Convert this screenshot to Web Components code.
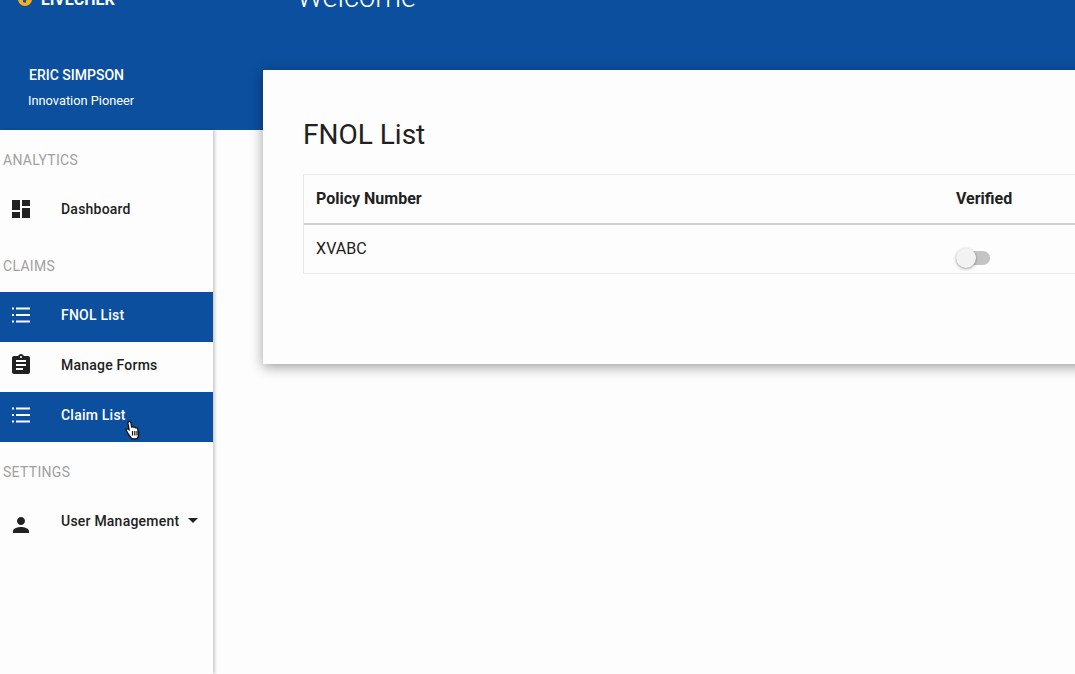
<!DOCTYPE html>
<html>
<head>
<meta charset="utf-8">
<title>FNOL List</title>
<style>
  html, body { margin: 0; height: 100%; overflow: hidden; background: #fdfdfd; }
  body { font-family: Roboto, "Liberation Sans", sans-serif; color: #212121; }
</style>
</head>
<body>
<app-shell>
  <nav-panel slot="nav">
    <nav-heading>ANALYTICS</nav-heading>
    <nav-item icon="dashboard">Dashboard</nav-item>
    <nav-heading>CLAIMS</nav-heading>
    <nav-item icon="list" active>FNOL List</nav-item>
    <nav-item icon="assignment">Manage Forms</nav-item>
    <nav-item icon="list" active hovered>Claim List</nav-item>
    <nav-heading>SETTINGS</nav-heading>
    <nav-item icon="person" caret>User Management</nav-item>
  </nav-panel>
  <list-card slot="main" heading="FNOL List">
    <policy-table></policy-table>
  </list-card>
</app-shell>

<script>
const ICONS = {
  dashboard: '<path d="M3 13h8V3H3v10zm0 8h8v-6H3v6zm10 0h8V11h-8v10zm0-18v6h8V3h-8z"/>',
  list: '<path d="M3 4.5h2v2H3zM7 4.6h14v1.800H7zM3 11h2v2H3zM7 11.100h14v1.800H7zM3 17.500h2v2H3zM7 17.600h14v1.800H7z"/>',
  assignment: '<path d="M19 3h-4.18C14.4 1.84 13.3 1 12 1s-2.4.84-2.82 2H5c-1.1 0-2 .9-2 2v14c0 1.1.9 2 2 2h14c1.1 0 2-.9 2-2V5c0-1.1-.9-2-2-2zm-7 0c.55 0 1 .45 1 1s-.45 1-1 1-1-.45-1-1 .45-1 1-1zm2 14H7v-2h7v2zm3-4H7v-2h10v2zm0-4H7V7h10v2z"/>',
  person: '<path d="M12 12c2.21 0 4-1.79 4-4s-1.79-4-4-4-4 1.79-4 4 1.79 4 4 4zm0 2c-2.67 0-8 1.34-8 4v2h16v-2c0-2.66-5.33-4-8-4z"/>'
};

class AppShell extends HTMLElement {
  constructor() {
    super();
    this.attachShadow({ mode: "open" }).innerHTML = `
      <style>
        :host { display: flex; height: 674px; width: 1075px; overflow: hidden; }
        .left { flex: 0 0 263px; display: flex; flex-direction: column; }
        .right { flex: 1; min-width: 0; }
        .brand { height: 70px; background: #0b4f9e; color: #fff; display: flex; align-items: flex-end; box-sizing: border-box; padding: 0 0 62px 18px; gap: 9px; font-weight: 700; font-size: 16px; line-height: 16px; }
        .brand svg { width: 14px; height: 14px; flex: none; margin-bottom: 2px; }
        .profile { height: 60px; background: #0b4f9e; color: #fff; box-sizing: border-box; padding-left: 28px; }
        .name { font-size: 14px; font-weight: 500; line-height: 16px; padding: 0 0 0 1px; margin-top: -3px; }
        .role { font-size: 12.8px; line-height: 16px; margin-top: 10px; }
        .title { height: 70px; background: #0b4f9e; color: #fff; font-weight: 300; font-size: 29px; line-height: 36px; box-sizing: border-box; padding: 0 0 55px 34px; margin-left: 0; display: flex; align-items: flex-end; }
        .nav { flex: 1; width: 213px; box-shadow: 2px 0 3px rgba(0,0,0,.2); background: #fdfdfd; }
      </style>
      <div class="left">
        <div class="brand">
          <svg viewBox="0 0 14 14"><circle cx="7" cy="7" r="7" fill="#fbb01a"/><path d="M5 6h4l-1.500 5-2.500-1z" fill="#0b4f9e"/></svg>
          <span>LIVECHEK</span>
        </div>
        <div class="profile">
          <div class="name">ERIC SIMPSON</div>
          <div class="role">Innovation Pioneer</div>
        </div>
        <div class="nav"><slot name="nav"></slot></div>
      </div>
      <div class="right">
        <div class="title"><span>Welcome</span></div>
        <slot name="main"></slot>
      </div>
    `;
  }
}

class NavPanel extends HTMLElement {
  constructor() {
    super();
    this.attachShadow({ mode: "open" }).innerHTML = `
      <style>:host { display: flex; flex-direction: column; }</style>
      <slot></slot>
    `;
  }
}

class NavHeading extends HTMLElement {
  constructor() {
    super();
    this.attachShadow({ mode: "open" }).innerHTML = `
      <style>
        :host { display: block; height: 56px; line-height: 60px; padding-left: 3px; font-size: 14px; letter-spacing: .3px; color: #a0a0a0; box-sizing: border-box; }
      </style>
      <slot></slot>
    `;
  }
}

class NavItem extends HTMLElement {
  constructor() {
    super();
    const name = this.getAttribute("icon");
    const caret = this.hasAttribute("caret") ? '<span class="caret"></span>' : "";
    const hand = this.hasAttribute("hovered") ? `
      <svg class="hand" viewBox="0 0 16 20">
        <path d="M3.600 1.600c.9-.7 2-.2 2.200.9l.9 4.600.6-.3c.8-.3 1.500 0 1.700.6.7-.4 1.600-.2 1.900.6.7-.3 1.600 0 1.800.8l.9 4.600c.3 2.200-.3 4.200-1.600 5.400H7c-1.100-.9-2.500-2.900-3.600-4.600L1.200 10.400c-.5-.9.5-1.900 1.500-1.400l1.400.8L3 3.400c-.1-.8 0-1.400.6-1.800z" fill="#fff" stroke="#111" stroke-width="1.300"/>
        <path d="M7.500 11v4.500M9.800 11v4.500M12 11v4.500" stroke="#111" stroke-width="1.200" fill="none"/>
      </svg>` : "";
    this.attachShadow({ mode: "open" }).innerHTML = `
      <style>
        :host { display: flex; align-items: center; height: 50px; font-size: 14px; font-weight: 500; letter-spacing: .22px; color: #212121; position: relative; }
        :host([active]) { background: #0b4f9e; color: #fff; }
        svg.ico { width: 24px; height: 24px; fill: currentColor; margin: 0 0 4px 9px; flex: none; }
        :host([icon="person"]) svg.ico { margin: 4px 0 0 9px; }
        .label { margin-left: 28px; position: relative; top: -2px; }
        .caret { width: 0; height: 0; border: 5px solid transparent; border-top-color: currentColor; border-bottom: 0; margin: 0 0 5px 9px; }
        .hand { position: absolute; left: 125px; top: 28px; width: 16px; height: 20px; }
      </style>
      <svg class="ico" viewBox="0 0 24 24">${ICONS[name]}</svg>
      <span class="label"><slot></slot></span>
      ${caret}
      ${hand}
    `;
  }
}

class ListCard extends HTMLElement {
  constructor() {
    super();
    this.attachShadow({ mode: "open" }).innerHTML = `
      <style>
        :host { display: block; width: 1000px; height: 294px; box-sizing: border-box; padding: 47px 40px 0; background: #fdfdfd; box-shadow: 0 3px 12px rgba(0,0,0,.38); position: relative; }
        h2 { margin: 0 0 21px; font-size: 28px; font-weight: 400; line-height: 36px; color: #212121; }
      </style>
      <h2>${this.getAttribute("heading")}</h2>
      <slot></slot>
    `;
  }
}

class PolicyTable extends HTMLElement {
  constructor() {
    super();
    this.attachShadow({ mode: "open" }).innerHTML = `
      <style>
        :host { display: block; border: 1px solid #e8e8e8; border-right: 0; font-size: 16px; color: #212121; }
        .row { display: grid; grid-template-columns: 640px 1fr; padding-left: 12px; }
        .head { height: 48px; box-sizing: content-box; align-items: center; font-weight: 700; border-bottom: 2px solid #cfcfcf; line-height: 46px; }
        .body { height: 48px; line-height: 48px; }
        .switch { display: block; position: relative; width: 34px; height: 14px; background: #c4c4c4; border-radius: 7px; margin-top: 26px; }
        .switch::after { content: ""; position: absolute; left: 0; top: -3px; width: 20px; height: 20px; border-radius: 50%; background: #f2f2f2; box-shadow: 0 1px 3px rgba(0,0,0,.4); }
      </style>
      <div class="row head"><div>Policy Number</div><div>Verified</div></div>
      <div class="row body"><div>XVABC</div><div><span class="switch"></span></div></div>
    `;
  }
}

customElements.define("app-shell", AppShell);
customElements.define("nav-panel", NavPanel);
customElements.define("nav-heading", NavHeading);
customElements.define("nav-item", NavItem);
customElements.define("list-card", ListCard);
customElements.define("policy-table", PolicyTable);
</script>
</body>
</html>
